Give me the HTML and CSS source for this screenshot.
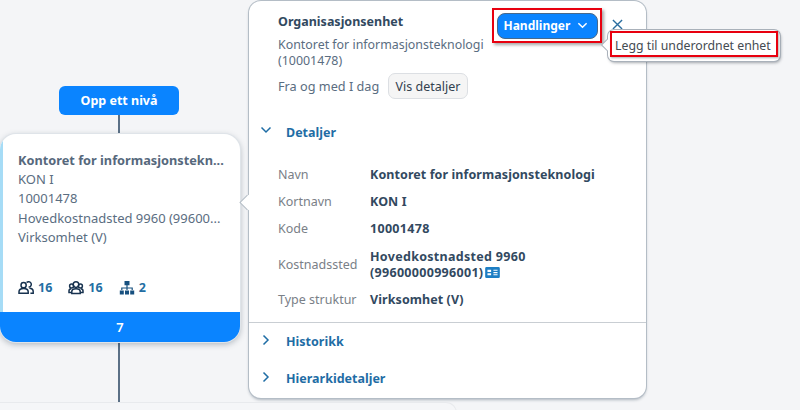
FILE: index.html
```html
<!DOCTYPE html>
<html lang="no">
<head>
<meta charset="utf-8">
<title>Organisasjonsenhet</title>
<link rel="stylesheet" href="styles.css">
</head>
<body>
<main class="canvas">
  <div class="line line-top"></div>
  <div class="line line-bottom"></div>
  <button class="up">Opp ett nivå</button>

  <article class="card">
    <div class="card-body">
      <div class="card-title">Kontoret for informasjonstekn...</div>
      <div class="card-line">KON I</div>
      <div class="card-line">10001478</div>
      <div class="card-line">Hovedkostnadsted 9960 (99600...</div>
      <div class="card-line">Virksomhet (V)</div>
      <div class="stats">
        <span class="stat">
          <svg class="stat-icon" viewBox="0 0 16 16"><circle cx="5.6" cy="5.200" r="2.600"/><path d="M8.600 2.600a2.700 2.700 0 1 1 2 4.500"/><path d="M1 13.200v-1.400c0-2 1.800-3.400 4.600-3.400s4.600 1.400 4.600 3.400v1.400z"/><path d="M11.400 8.200c2.300.1 3.800 1.300 3.800 3.200v1.800h-2.800"/></svg>
          16
        </span>
        <span class="stat">
          <svg class="stat-icon" viewBox="0 0 16 16"><circle cx="8" cy="4.600" r="2.800"/><circle cx="3.600" cy="6" r="2"/><circle cx="12.400" cy="6" r="2"/><path d="M3.800 13.600v-2c0-1.800 1.800-2.900 4.200-2.900s4.200 1.100 4.200 2.900v2z"/><path d="M3.800 12.400H1v-1.600c0-1.200.9-2 2.200-2.100M12.200 12.400H15v-1.600c0-1.200-.9-2-2.200-2.100"/></svg>
          16
        </span>
        <span class="stat">
          <svg class="stat-icon solid" viewBox="0 0 16 16"><path d="M5.500 1h5v4.200h-5zM7.400 5.200h1.200v2.200h5.200V10h-1.200V8.600H8.600V10H7.400V8.600H3.400V10H2.200V7.400h5.200zM.8 10.400h4v4.200h-4zM6 10.400h4v4.200H6zM11.200 10.400h4v4.200h-4z"/></svg>
          2
        </span>
      </div>
    </div>
    <div class="card-foot">7</div>
  </article>

  <section class="popover">
    <header class="pop-head">
      <div class="pop-title">Organisasjonsenhet</div>
      <div class="pop-name">Kontoret for informasjonsteknologi<br>(10001478)</div>
      <div class="pop-date">Fra og med I dag <button class="details-btn">Vis detaljer</button></div>
    </header>
    <div class="section-head open">
      <svg class="chev" viewBox="0 0 12 12"><path d="M1.500 3.500 6 8l4.500-4.500"/></svg>
      <span>Detaljer</span>
    </div>
    <dl class="facts">
      <dt>Navn</dt><dd>Kontoret for informasjonsteknologi</dd>
      <dt>Kortnavn</dt><dd>KON I</dd>
      <dt>Kode</dt><dd class="num">10001478</dd>
      <dt>Kostnadssted</dt>
      <dd class="two">Hovedkostnadsted 9960<br>(99600000996001)<svg class="id-icon" viewBox="0 0 16 12"><path fill-rule="evenodd" d="M1.500 0h13A1.500 1.500 0 0 1 16 1.500v9a1.500 1.500 0 0 1-1.500 1.500h-13A1.500 1.500 0 0 1 0 10.500v-9A1.500 1.500 0 0 1 1.500 0zM2.500 3v2.500h4V3zM9 3v1.200h4.500V3zM9 5.500v1.200h4.500V5.500zM2.500 6.700V9h4V6.700zM9 7.900v1.200h4.500V7.900z"/></svg></dd>
      <dt>Type struktur</dt><dd>Virksomhet (V)</dd>
    </dl>
    <div class="rule"></div>
    <div class="section-head closed">
      <svg class="chev" viewBox="0 0 12 12"><path d="M3.500 1.500 8 6l-4.500 4.500"/></svg>
      <span>Historikk</span>
    </div>
    <div class="section-head closed">
      <svg class="chev" viewBox="0 0 12 12"><path d="M3.500 1.500 8 6l-4.500 4.500"/></svg>
      <span>Hierarkidetaljer</span>
    </div>
    <div class="actions-mark">
      <button class="actions">Handlinger
        <svg class="actions-chev" viewBox="0 0 12 12"><path d="M1.500 3.500 6 8l4.500-4.500"/></svg>
      </button>
    </div>
    <svg class="close" viewBox="0 0 12 12"><path d="M1 1l10 10M11 1 1 11"/></svg>
  </section>

  <div class="menu"><span class="menu-item">Legg til underordnet enhet</span></div>
  <div class="bottom-panel"></div>
</main>
</body>
</html>
```

FILE: styles.css
```css
* { box-sizing: border-box; }
html, body { margin: 0; padding: 0; }
body {
  width: 800px;
  height: 410px;
  overflow: hidden;
  background: #f4f5f7;
  font-family: "Noto Sans", "Open Sans", sans-serif;
  color: #32495f;
}
button { font-family: inherit; cursor: pointer; }
.canvas { position: relative; width: 800px; height: 410px; overflow: hidden; }

.line { position: absolute; left: 118px; width: 2px; background: #5b7086; }
.line-top { top: 112px; height: 24px; }
.line-bottom { top: 340px; height: 64px; }

.up {
  position: absolute;
  left: 59px;
  top: 86px;
  width: 120px;
  height: 29px;
  border: 0;
  border-radius: 6px;
  background: #0a84ff;
  color: #fff;
  font-size: 12.500px;
  font-weight: 700;
  padding: 0;
}

.card {
  position: absolute;
  left: 0;
  top: 134px;
  width: 240px;
  height: 208px;
  border-radius: 16px;
  background: #fff;
  box-shadow: 0 0 0 1px #dfe4e9, 0 2px 6px rgba(30, 50, 70, .35);
  display: flex;
  flex-direction: column;
  overflow: hidden;
}
.card::before {
  content: "";
  position: absolute;
  left: 0;
  top: 0;
  width: 3px;
  height: 178px;
  background: #a6dcf6;
}
.card-body { flex: 1; padding: 17px 0 0 18px; }
.card-title { font-size: 12.750px; line-height: 19px; font-weight: 700; color: #56687c; white-space: nowrap; }
.card-line { font-size: 13px; line-height: 19.300px; color: #5a6d81; white-space: nowrap; }
.stats { display: flex; gap: 16px; margin-top: 33px; }
.stat { display: flex; align-items: center; gap: 4px; font-size: 12.500px; font-weight: 700; color: #236ea3; line-height: 16px; }
.stat-icon { width: 16px; height: 16px; fill: none; stroke: #17324f; stroke-width: 1.500; }
.stat-icon.solid { fill: #17507f; stroke: none; }
.card-foot {
  height: 30px;
  background: #0a84ff;
  color: #fff;
  font-size: 13px;
  font-weight: 600;
  text-align: center;
  line-height: 30px;
}

.popover {
  position: absolute;
  left: 249px;
  top: 1px;
  width: 397px;
  height: 397px;
  border-radius: 12px;
  background: #fff;
  box-shadow: 0 0 0 1px #b4bdc6, 0 2px 3px rgba(40, 60, 80, .35);
}
.popover::before {
  content: "";
  position: absolute;
  left: -6px;
  top: 196px;
  width: 11px;
  height: 11px;
  background: #fff;
  transform: rotate(45deg);
  box-shadow: -1px 1px 0 #b4bdc6;
}
.pop-head { position: relative; padding: 12px 0 0 29px; }
.pop-title { font-size: 12.500px; line-height: 18px; font-weight: 700; color: #32495f; }
.pop-name { margin-top: 6px; font-size: 12.400px; line-height: 15.500px; color: #5a6d81; }
.pop-date { margin-top: 5px; display: flex; align-items: center; gap: 5px; font-size: 12.700px; color: #5a6d81; line-height: 26px; white-space: pre; }
.details-btn {
  height: 26px;
  padding: 0 7px;
  border: 1px solid #dcdfe3;
  border-radius: 7px;
  background: #f5f5f5;
  color: #33414f;
  font-size: 12.500px;
}

.section-head {
  position: relative;
  display: flex;
  align-items: center;
  font-size: 12.500px;
  font-weight: 700;
  color: #1f6da5;
  padding-left: 37px;
}
.section-head.open { margin-top: 23px; height: 20px; }
.section-head.closed { height: 37px; }
.chev { position: absolute; left: 11px; top: 50%; margin-top: -8px; width: 12px; height: 12px; fill: none; stroke: #1f6da5; stroke-width: 1.500; }

.facts {
  margin: 19px 0 0;
  display: grid;
  grid-template-columns: 92px 1fr;
  padding-left: 29px;
  align-items: center;
  font-size: 12.500px;
}
.facts dt { color: #7a8087; line-height: 27px; }
.facts dd { margin: 0; font-weight: 700; color: #32495f; line-height: 27px; letter-spacing: .08px; }
.facts dd.num { letter-spacing: .3px; }
.facts dd.two { line-height: 15.500px; padding: 7px 0 6px; letter-spacing: .3px; }
.id-icon { width: 15px; height: 11px; margin-left: 2px; fill: #1d7ec4; vertical-align: -1px; }
.rule { height: 1px; background: #c9ced3; margin-top: 9px; }

.actions-mark {
  position: absolute;
  left: 243px;
  top: 7px;
  width: 110px;
  height: 35px;
  border: 2px solid #e8000f;
  box-shadow: 2px 2px 3px rgba(0, 0, 0, .35);
  display: flex;
  align-items: center;
  justify-content: center;
}
.actions {
  display: flex;
  align-items: center;
  gap: 7px;
  width: 101px;
  height: 26px;
  padding: 0 0 0 6px;
  border: 1px solid #46698c;
  border-radius: 8px;
  background: #0a84ff;
  color: #fff;
  font-size: 12px;
  font-weight: 700;
  white-space: nowrap;
}
.actions-chev { width: 11px; height: 11px; fill: none; stroke: #fff; stroke-width: 1.600; }
.close { position: absolute; left: 363px; top: 18px; width: 11px; height: 11px; fill: none; stroke: #2a6d9f; stroke-width: 1.500; }

.menu {
  position: absolute;
  left: 608px;
  top: 30px;
  width: 172px;
  height: 31px;
  padding: 1px 2px;
  border-radius: 6px;
  background: #fff;
  box-shadow: 0 0 0 1px #a9b1ba, 1px 2px 3px rgba(40, 50, 60, .4);
}
.menu::before {
  content: "";
  position: absolute;
  left: -4px;
  top: 11px;
  width: 8px;
  height: 8px;
  background: #fff;
  transform: rotate(45deg);
  box-shadow: -1px 1px 0 #a9b1ba;
}
.menu-item {
  position: relative;
  display: block;
  height: 26px;
  border: 2px solid #e8000f;
  box-shadow: 1px 1px 2px rgba(0, 0, 0, .3);
  font-size: 12.300px;
  line-height: 25px;
  color: #444b52;
  padding-left: 3px;
  white-space: nowrap;
}

.bottom-panel {
  position: absolute;
  left: -10px;
  top: 403px;
  width: 466px;
  height: 40px;
  border-radius: 10px;
  background: #f5f6f8;
  box-shadow: 0 0 0 1px #e8eaed;
}
```
